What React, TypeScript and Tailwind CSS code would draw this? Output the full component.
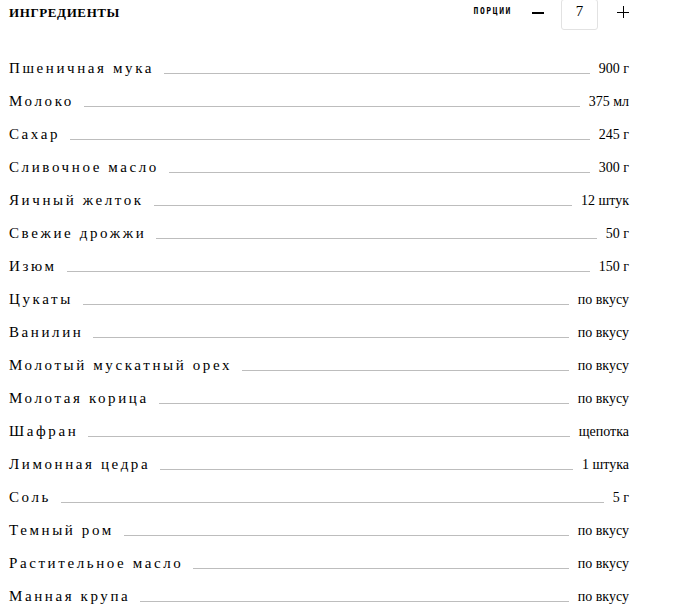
import React from "react";

const items: [string, string][] = [
  ["Пшеничная мука", "900 г"],
  ["Молоко", "375 мл"],
  ["Сахар", "245 г"],
  ["Сливочное масло", "300 г"],
  ["Яичный желток", "12 штук"],
  ["Свежие дрожжи", "50 г"],
  ["Изюм", "150 г"],
  ["Цукаты", "по вкусу"],
  ["Ванилин", "по вкусу"],
  ["Молотый мускатный орех", "по вкусу"],
  ["Молотая корица", "по вкусу"],
  ["Шафран", "щепотка"],
  ["Лимонная цедра", "1 штука"],
  ["Соль", "5 г"],
  ["Темный ром", "по вкусу"],
  ["Растительное масло", "по вкусу"],
  ["Манная крупа", "по вкусу"],
];

export default function App() {
  return (
    <div className="w-[688px] h-[614px] bg-white overflow-hidden text-black font-['Liberation_Serif',serif]">
      <div className="w-[629px] pl-[9px]">
        <div className="flex items-start justify-between h-[30px]">
          <div className="text-[13px] font-bold tracking-[0.6px] leading-none mt-[6px]">ИНГРЕДИЕНТЫ</div>
          <div className="flex items-start">
            <span className="text-[8px] font-bold tracking-[1.6px] leading-none mt-[8px] font-['DejaVu_Sans_Mono',monospace]">
              ПОРЦИИ
            </span>
            <span className="ml-[20px] mt-[12px] w-[12px] h-[1.5px] bg-black" />
            <div className="ml-[17px] -mt-px w-[37px] h-[31px] border border-[#e2e2e2] rounded-[3px] flex items-center justify-center text-[15px] pb-[6px]">
              7
            </div>
            <span className="ml-[19px] mt-[6px] relative w-[12px] h-[12px]">
              <span className="absolute left-0 top-[5.5px] w-[12px] h-[1.5px] bg-black" />
              <span className="absolute top-0 left-[5.5px] w-[1.5px] h-[12px] bg-black" />
            </span>
          </div>
        </div>
        <div className="mt-[29px] flex flex-col gap-[16px]">
          {items.map(([name, val]) => (
            <div key={name} className="flex items-end h-[17px]">
              <span className="text-[15px] tracking-[2.6px] leading-none whitespace-nowrap">{name}</span>
              <span className="flex-1 h-px bg-[#bdbdbd] ml-[10px] mr-[9px] mb-[2px]" />
              <span className="text-[14px] leading-none whitespace-nowrap">{val}</span>
            </div>
          ))}
        </div>
      </div>
    </div>
  );
}
